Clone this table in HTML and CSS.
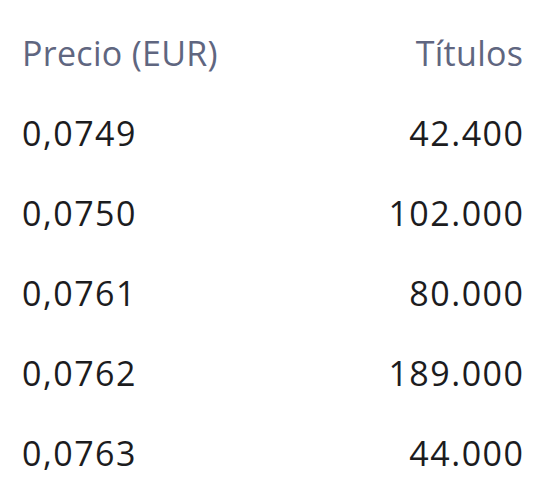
FILE: index.html
```html
<!DOCTYPE html>
<html lang="es">
<head>
<meta charset="utf-8">
<link rel="stylesheet" href="styles.css">
</head>
<body>
<div class="table">
  <div class="row head"><span class="cell">Precio (EUR)</span><span class="cell end">Títulos</span></div>
  <div class="row"><span class="cell num">0,0749</span><span class="cell num end">42.400</span></div>
  <div class="row"><span class="cell num">0,0750</span><span class="cell num end">102.000</span></div>
  <div class="row"><span class="cell num">0,0761</span><span class="cell num end">80.000</span></div>
  <div class="row"><span class="cell num">0,0762</span><span class="cell num end">189.000</span></div>
  <div class="row"><span class="cell num">0,0763</span><span class="cell num end">44.000</span></div>
</div>
</body>
</html>
```
FILE: styles.css
```css
html, body {
  margin: 0;
  padding: 0;
  background: #ffffff;
}
.table {
  padding: 13px 37px 0 22px;
  font-family: "Open Sans", sans-serif;
  font-size: 34px;
  color: #1c1c1e;
}
.row {
  display: flex;
  justify-content: space-between;
  height: 80px;
  line-height: 80px;
}
.head {
  color: #5f6680;
  letter-spacing: 0.3px;
}
.head .end {
  margin-right: -0.3px;
}
.num {
  letter-spacing: 1.5px;
}
.num.end {
  margin-right: -1.5px;
}
```
